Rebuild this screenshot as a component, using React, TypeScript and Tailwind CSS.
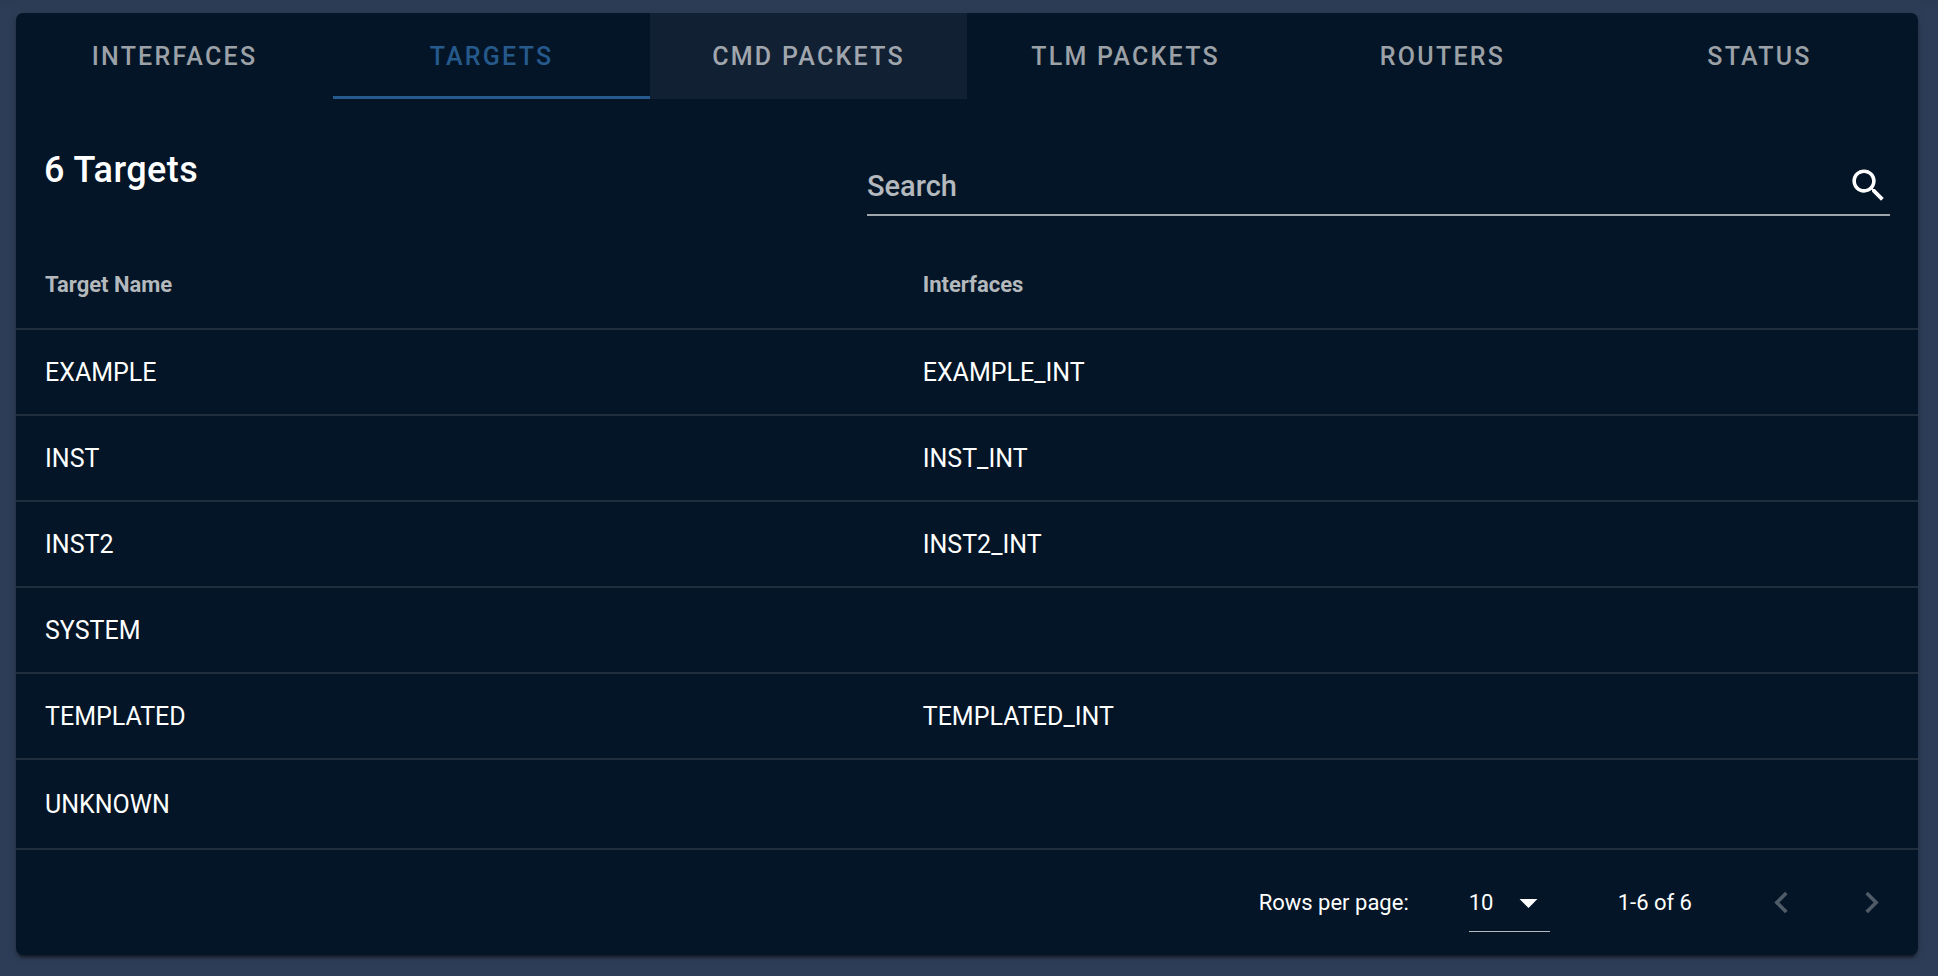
import { useState } from "react";

const tabs = ["INTERFACES", "TARGETS", "CMD PACKETS", "TLM PACKETS", "ROUTERS", "STATUS"];

const targets = [
  { name: "EXAMPLE", iface: "EXAMPLE_INT" },
  { name: "INST", iface: "INST_INT" },
  { name: "INST2", iface: "INST2_INT" },
  { name: "SYSTEM", iface: "" },
  { name: "TEMPLATED", iface: "TEMPLATED_INT" },
  { name: "UNKNOWN", iface: "" },
];

function Icon({ d, className }: { d: string; className: string }) {
  return (
    <svg viewBox="0 0 24 24" fill="currentColor" aria-hidden="true" className={className}>
      <path d={d} />
    </svg>
  );
}

const magnify =
  "M9.5,3A6.5,6.5 0 0,1 16,9.5C16,11.11 15.41,12.59 14.44,13.73L14.71,14H15.5L20.5,19L19,20.5L14,15.5V14.71L13.73,14.44C12.59,15.41 11.11,16 9.5,16A6.5,6.5 0 0,1 3,9.5A6.5,6.5 0 0,1 9.5,3M9.5,5C7,5 5,7 5,9.5C5,12 7,14 9.5,14C12,14 14,12 14,9.5C14,7 12,5 9.5,5Z";
const menuDown = "M7,10L12,15L17,10H7Z";
const chevronLeft = "M15.41,16.58L10.83,12L15.41,7.41L14,6L8,12L14,18L15.41,16.58Z";
const chevronRight = "M8.59,16.58L13.17,12L8.59,7.41L10,6L16,12L10,18L8.59,16.58Z";

export default function App() {
  const [query, setQuery] = useState("");
  const rows = targets.filter((t) => (t.name + " " + t.iface).toLowerCase().includes(query.toLowerCase()));

  return (
    <div className="min-h-screen bg-[#2e3d57] bg-linear-to-b from-[#2c3b53] to-[#2e3d57] to-[12px] pt-[13px] pr-5 pb-[22px] pl-4 font-[Roboto,sans-serif] text-white">
      <main className="overflow-hidden rounded-[7px] bg-[#031526] shadow-[0_5px_2px_-3px_rgba(0,0,0,0.3),0_3px_3px_rgba(0,0,0,0.2),0_2px_9px_rgba(0,0,0,0.18)]">
        <nav role="tablist" className="grid grid-cols-6">
          {tabs.map((tab) => (
            <button
              key={tab}
              role="tab"
              aria-selected={tab === "TARGETS"}
              className={
                "h-[86px] border-b-3 pt-[5px] text-[25px] font-medium tracking-[0.09em] " +
                (tab === "TARGETS"
                  ? "border-[#26598c] text-[#26598c]"
                  : tab === "CMD PACKETS"
                    ? "border-transparent bg-[#122033] text-[#a0a6ad]"
                    : "border-transparent text-[#9ba1a7]")
              }
            >
              {tab}
            </button>
          ))}
        </nav>

        <header className="flex items-start justify-between px-7 pt-[43px]">
          <h1 className="pt-1 text-[36px] leading-[48px] font-medium tracking-[0.0125em]">6 Targets</h1>
          <label className="mt-[14px] flex h-[60px] w-[1023px] max-w-[56%] items-center border-b-2 border-[#9ea5ab]">
            <input
              type="text"
              placeholder="Search"
              aria-label="Search"
              value={query}
              onChange={(e) => setQuery(e.target.value)}
              className="min-w-0 flex-1 bg-transparent pt-[2px] text-[29px] leading-9 font-medium outline-none placeholder:text-[#b4b9bd] placeholder:opacity-100"
            />
            <Icon d={magnify} className="size-[43px]" />
          </label>
        </header>

        <table className="mt-[26px] w-full table-fixed border-separate border-spacing-0 text-left">
          <thead>
            <tr className="h-[88px] text-[22px] text-[#b4b9bd]">
              <th className="w-[46.2%] border-b-2 border-[#1f2d3c] px-[29px] pb-[2px] font-bold">Target Name</th>
              <th className="border-b-2 border-[#1f2d3c] px-7 pb-[2px] font-bold">Interfaces</th>
            </tr>
          </thead>
          <tbody className="text-[25px]">
            {rows.map((t) => (
              <tr key={t.name} className="h-[86px] last:h-[90px]">
                <td className="border-b-2 border-[#1f2d3c] px-[29px] pt-[2px]">{t.name}</td>
                <td className="border-b-2 border-[#1f2d3c] px-7 pt-[2px]">{t.iface}</td>
              </tr>
            ))}
          </tbody>
        </table>

        <footer className="flex h-[105px] items-center justify-end pr-[25px] text-[22px]">
          <label htmlFor="page-size">Rows per page:</label>
          <div className="relative ml-[60px] flex h-[58px] w-[81px] items-center border-b border-[#b4b9bd]">
            <select id="page-size" defaultValue="10" className="w-full appearance-none bg-transparent outline-none">
              <option className="text-black">10</option>
              <option className="text-black">20</option>
              <option className="text-black">50</option>
            </select>
            <Icon d={menuDown} className="pointer-events-none absolute right-0 size-[43px]" />
          </div>
          <span className="ml-[68px]">1-6 of 6</span>
          <button aria-label="Previous page" disabled className="ml-[68px] text-[#4f5b66]">
            <Icon d={chevronLeft} className="size-[43px]" />
          </button>
          <button aria-label="Next page" disabled className="ml-[47px] text-[#4f5b66]">
            <Icon d={chevronRight} className="size-[43px]" />
          </button>
        </footer>
      </main>
    </div>
  );
}
